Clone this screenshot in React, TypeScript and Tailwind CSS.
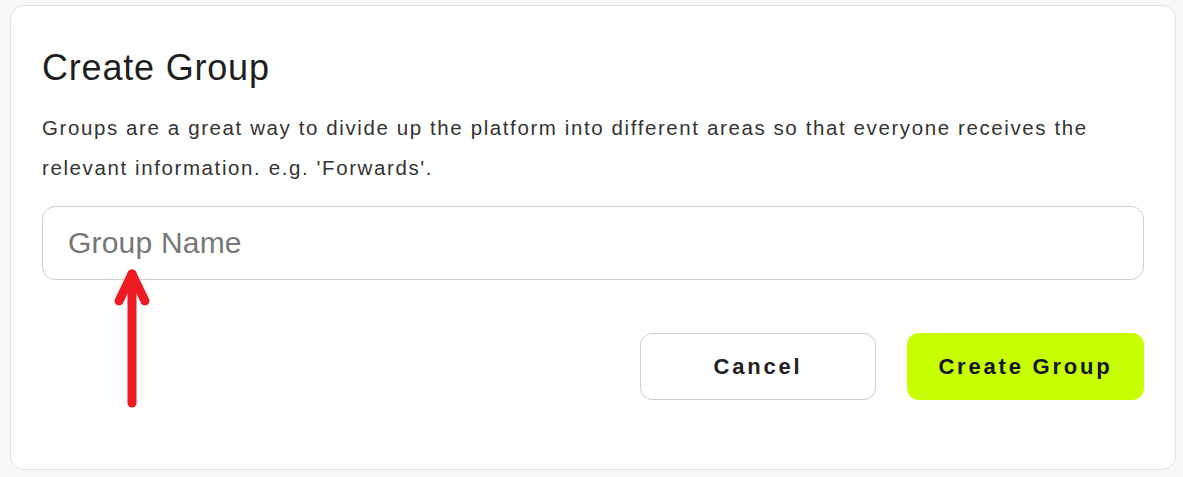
import React from "react";

export default function App() {
  return (
    <div className="min-h-screen w-full bg-[#f8f8f8] pt-[5px] pl-[10px]" style={{ fontFamily: '"Liberation Sans", Arial, sans-serif' }}>
      <div className="relative w-[1166px] h-[465px] rounded-[14px] border border-[#e2e2e2] bg-white px-[31px] pt-[40px]">
        <h1 className="text-[36px] leading-[44px] text-[#1f1f1f] tracking-[0.8px] font-normal">Create Group</h1>
        <p className="mt-[18px] text-[20.5px] leading-[40px] text-[#333] tracking-[1.6px]">
          Groups are a great way to divide up the platform into different areas so that everyone receives the relevant information. e.g. 'Forwards'.
        </p>
        <input
          className="mt-[18px] block w-[1102px] h-[74px] rounded-[13px] border border-[#cfcfcf] px-[25px] text-[30px] tracking-[0.2px] text-[#333] placeholder:text-[#777] outline-none"
          placeholder="Group Name"
        />
        <div className="mt-[53px] flex justify-end gap-[31px] w-[1102px]">
          <button className="w-[236px] h-[67px] rounded-[12px] border border-[#cfcfcf] bg-white text-[22px] font-bold tracking-[2.8px] text-[#222]">
            Cancel
          </button>
          <button className="w-[237px] h-[67px] rounded-[12px] bg-[#c6ff00] text-[22px] font-bold tracking-[2.8px] text-[#14142b]">
            Create Group
          </button>
        </div>
        <svg className="absolute left-[99px] top-[256px]" width="44" height="160" viewBox="0 0 44 160">
          <path d="M22 12 L22 141" stroke="#ed1c24" strokeWidth="9" strokeLinecap="round" fill="none" />
          <path d="M9 39 L22 12 L35 39" stroke="#ed1c24" strokeWidth="9" strokeLinecap="round" strokeLinejoin="round" fill="none" />
        </svg>
      </div>
    </div>
  );
}
